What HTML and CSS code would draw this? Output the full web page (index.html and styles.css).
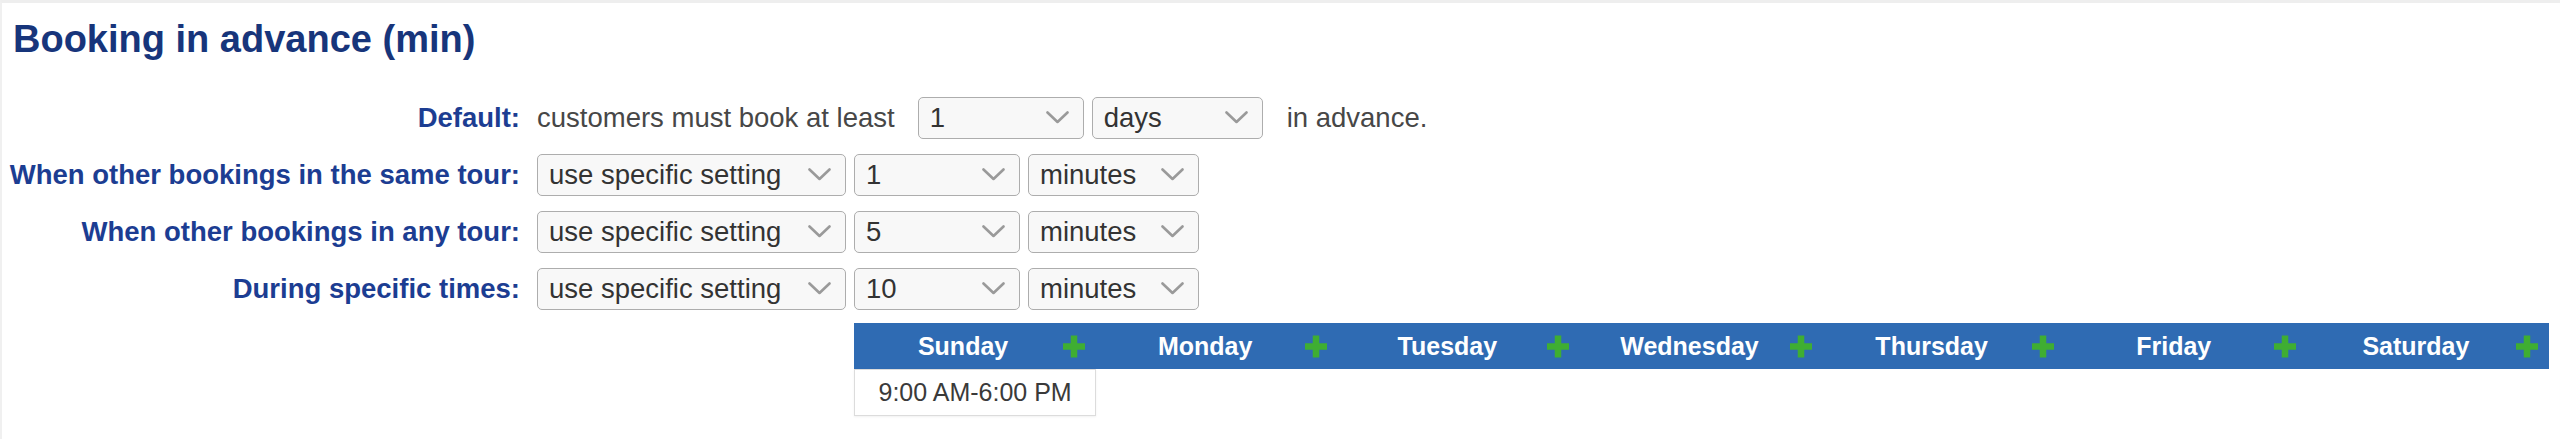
FILE: index.html
```html
<!DOCTYPE html>
<html lang="en">
<head>
<meta charset="utf-8">
<title>Booking in advance (min)</title>
<link rel="stylesheet" href="styles.css">
</head>
<body>
<div class="panel">
  <h2 class="title">Booking in advance (min)</h2>
  <div class="form">
    <div class="label">Default:</div>
    <div class="field">
      <span class="text before">customers must book at least</span>
      <div class="select num"><span>1</span><svg class="chev" viewBox="0 0 23 13"><path d="M1.5 1.5 L11.5 11 L21.5 1.5"/></svg></div>
      <div class="select unit"><span>days</span><svg class="chev" viewBox="0 0 23 13"><path d="M1.5 1.5 L11.5 11 L21.5 1.5"/></svg></div>
      <span class="text after">in advance.</span>
    </div>

    <div class="label">When other bookings in the same tour:</div>
    <div class="field">
      <div class="select setting"><span>use specific setting</span><svg class="chev" viewBox="0 0 23 13"><path d="M1.5 1.5 L11.5 11 L21.5 1.5"/></svg></div>
      <div class="select num"><span>1</span><svg class="chev" viewBox="0 0 23 13"><path d="M1.5 1.5 L11.5 11 L21.5 1.5"/></svg></div>
      <div class="select unit"><span>minutes</span><svg class="chev" viewBox="0 0 23 13"><path d="M1.5 1.5 L11.5 11 L21.5 1.5"/></svg></div>
    </div>

    <div class="label">When other bookings in any tour:</div>
    <div class="field">
      <div class="select setting"><span>use specific setting</span><svg class="chev" viewBox="0 0 23 13"><path d="M1.5 1.5 L11.5 11 L21.5 1.5"/></svg></div>
      <div class="select num"><span>5</span><svg class="chev" viewBox="0 0 23 13"><path d="M1.5 1.5 L11.5 11 L21.5 1.5"/></svg></div>
      <div class="select unit"><span>minutes</span><svg class="chev" viewBox="0 0 23 13"><path d="M1.5 1.5 L11.5 11 L21.5 1.5"/></svg></div>
    </div>

    <div class="label">During specific times:</div>
    <div class="field">
      <div class="select setting"><span>use specific setting</span><svg class="chev" viewBox="0 0 23 13"><path d="M1.5 1.5 L11.5 11 L21.5 1.5"/></svg></div>
      <div class="select num"><span>10</span><svg class="chev" viewBox="0 0 23 13"><path d="M1.5 1.5 L11.5 11 L21.5 1.5"/></svg></div>
      <div class="select unit"><span>minutes</span><svg class="chev" viewBox="0 0 23 13"><path d="M1.5 1.5 L11.5 11 L21.5 1.5"/></svg></div>
    </div>
  </div>

  <div class="week">
    <div class="day-head"><span class="day-name">Sunday</span><svg class="plus" viewBox="0 0 24 24"><path d="M12 1 V23 M1 12 H23"/></svg></div>
    <div class="day-head"><span class="day-name">Monday</span><svg class="plus" viewBox="0 0 24 24"><path d="M12 1 V23 M1 12 H23"/></svg></div>
    <div class="day-head"><span class="day-name">Tuesday</span><svg class="plus" viewBox="0 0 24 24"><path d="M12 1 V23 M1 12 H23"/></svg></div>
    <div class="day-head"><span class="day-name">Wednesday</span><svg class="plus" viewBox="0 0 24 24"><path d="M12 1 V23 M1 12 H23"/></svg></div>
    <div class="day-head"><span class="day-name">Thursday</span><svg class="plus" viewBox="0 0 24 24"><path d="M12 1 V23 M1 12 H23"/></svg></div>
    <div class="day-head"><span class="day-name">Friday</span><svg class="plus" viewBox="0 0 24 24"><path d="M12 1 V23 M1 12 H23"/></svg></div>
    <div class="day-head"><span class="day-name">Saturday</span><svg class="plus" viewBox="0 0 24 24"><path d="M12 1 V23 M1 12 H23"/></svg></div>

    <div class="slot">9:00 AM-6:00 PM</div>
  </div>
</div>
</body>
</html>
```

FILE: styles.css
```css
* { box-sizing: border-box; }

html, body {
  margin: 0;
  padding: 0;
  background: #ffffff;
}

body {
  font-family: "Liberation Sans", Arial, sans-serif;
  color: #444444;
}

.panel {
  border-top: 3px solid #eeeeee;
  border-left: 2px solid #f0f0f0;
  min-height: 439px;
}

.title {
  margin: 14px 0 28px 11px;
  font-size: 38px;
  line-height: 44px;
  font-weight: bold;
  color: #17357b;
}

.form {
  display: grid;
  grid-template-columns: 518px auto;
  grid-auto-rows: 57px;
  column-gap: 17px;
  align-items: center;
  justify-content: start;
}

.label {
  text-align: right;
  font-size: 27.5px;
  font-weight: bold;
  color: #1c3d92;
  white-space: nowrap;
}

.field {
  display: flex;
  align-items: center;
  gap: 8px;
}

.text {
  font-size: 27.5px;
  color: #474747;
  white-space: nowrap;
}

.text.before { margin-right: 15px; }
.text.after { margin-left: 16px; }

.select {
  display: flex;
  align-items: center;
  justify-content: space-between;
  height: 42px;
  padding: 0 14px 0 11px;
  border: 1px solid #adadad;
  border-radius: 5px;
  background: #f8f8f8;
  font-size: 27.5px;
  color: #333333;
  white-space: nowrap;
}

.select.setting { width: 309px; }
.select.num { width: 166px; }
.select.unit { width: 171px; }

.chev {
  width: 23px;
  height: 13px;
  flex: none;
}

.chev path {
  fill: none;
  stroke: #9a9a9a;
  stroke-width: 2.6;
  stroke-linecap: round;
  stroke-linejoin: round;
}

.week {
  display: grid;
  grid-template-columns: repeat(7, 1fr);
  grid-template-rows: 46px 47px;
  width: 1695px;
  margin: 6px 0 0 852px;
}

.day-head {
  display: flex;
  align-items: center;
  background: #2f6bb3;
  padding: 0 10px;
}

.day-name {
  flex: 1;
  text-align: center;
  font-size: 25px;
  font-weight: bold;
  color: #ffffff;
}

.plus {
  width: 24px;
  height: 25px;
  flex: none;
}

.plus path {
  fill: none;
  stroke: #3fae32;
  stroke-width: 6.5;
}

.slot {
  display: flex;
  align-items: center;
  justify-content: center;
  border: 1px solid #dcdcdc;
  background: #ffffff;
  font-size: 25px;
  color: #3a3a3a;
  box-shadow: 0 1px 2px rgba(0, 0, 0, 0.06);
}
```
